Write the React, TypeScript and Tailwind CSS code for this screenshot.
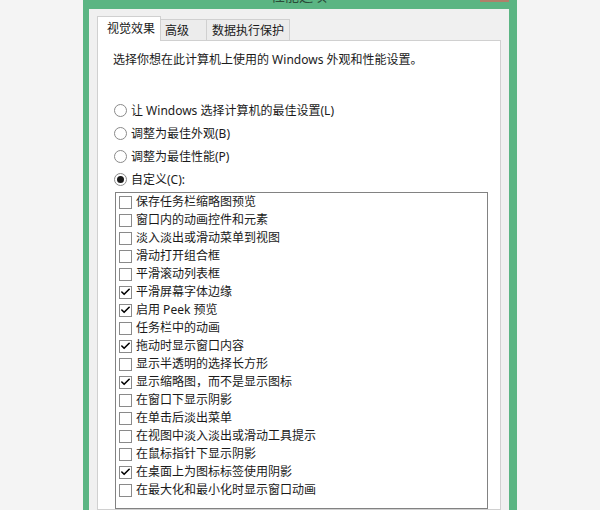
import { Check } from "lucide-react";

const radios = [
  { label: "让 Windows 选择计算机的最佳设置(L)", on: false },
  { label: "调整为最佳外观(B)", on: false },
  { label: "调整为最佳性能(P)", on: false },
  { label: "自定义(C):", on: true },
];

const effects = [
  { label: "保存任务栏缩略图预览", on: false },
  { label: "窗口内的动画控件和元素", on: false },
  { label: "淡入淡出或滑动菜单到视图", on: false },
  { label: "滑动打开组合框", on: false },
  { label: "平滑滚动列表框", on: false },
  { label: "平滑屏幕字体边缘", on: true },
  { label: "启用 Peek 预览", on: true },
  { label: "任务栏中的动画", on: false },
  { label: "拖动时显示窗口内容", on: true },
  { label: "显示半透明的选择长方形", on: false },
  { label: "显示缩略图，而不是显示图标", on: true },
  { label: "在窗口下显示阴影", on: false },
  { label: "在单击后淡出菜单", on: false },
  { label: "在视图中淡入淡出或滑动工具提示", on: false },
  { label: "在鼠标指针下显示阴影", on: false },
  { label: "在桌面上为图标标签使用阴影", on: true },
  { label: "在最大化和最小化时显示窗口动画", on: false },
];

function Radio({ on }: { on: boolean }) {
  return (
    <span className="flex h-[13px] w-[13px] items-center justify-center rounded-full border border-[#8a8a8a] bg-white">
      {on && <span className="h-[7px] w-[7px] rounded-full bg-[#1a1a1a]" />}
    </span>
  );
}

function Box({ on }: { on: boolean }) {
  return (
    <span className="flex h-[13px] w-[13px] items-center justify-center border border-[#8a8a8a] bg-white">
      {on && <Check className="h-[12px] w-[12px] text-black" strokeWidth={3.5} />}
    </span>
  );
}

export default function App() {
  return (
    <div className="h-[510px] w-[600px] overflow-hidden bg-[#f4f4f4] font-['Noto_Sans','Noto_Sans_CJK_SC',sans-serif] text-[12px] text-[#1a1a1a]">
      <div className="ml-[83px] flex h-full w-[434px] flex-col bg-[#5bb583] pl-[6px] pr-[8px]">
        {/* title bar, mostly scrolled out of view */}
        <div className="relative h-[9px] overflow-hidden">
          <div className="-mt-[12px] flex justify-center text-[14px] leading-[16px] text-[#2a4a38]">
            性能选项
          </div>
          <div className="absolute right-[-1px] top-0 h-[2px] w-[30px] bg-[#b0806a]" />
        </div>

        <div className="flex flex-1 flex-col bg-[#f0f0f0] px-[8px] pt-[7px]">
          {/* tabs */}
          <div className="flex h-[24px] items-end">
            <div className="relative z-10 -mb-px flex h-[25px] w-[64px] items-start border border-b-0 border-[#d0d0d0] bg-white pl-[9px] pt-[4px] leading-[16px]">
              视觉效果
            </div>
            <div className="flex h-[21px] w-[46px] items-start border border-l-0 border-b-0 border-[#d0d0d0] bg-[#ececec] pl-[4px] pt-[3px] leading-[16px]">
              高级
            </div>
            <div className="flex h-[21px] w-[83px] items-start border border-l-0 border-b-0 border-[#d0d0d0] bg-[#ececec] pl-[5px] pt-[3px] leading-[16px]">
              数据执行保护
            </div>
          </div>

          {/* tab page */}
          <div className="flex flex-1 flex-col border border-[#d0d0d0] bg-white pl-[15px] pt-[11px]">
            <p className="leading-[16px]">选择你想在此计算机上使用的 Windows 外观和性能设置。</p>

            <div className="mt-[31px] ml-[1px] flex flex-col">
              {radios.map((r) => (
                <div key={r.label} className="flex h-[23px] items-center gap-[4px]">
                  <Radio on={r.on} />
                  <span className="leading-[16px]">{r.label}</span>
                </div>
              ))}
            </div>

            <div className="ml-[2px] mt-[1px] flex w-[373px] flex-1 flex-col border border-[#828282] pl-[3px]">
              {effects.map((e) => (
                <div key={e.label} className="flex h-[18px] shrink-0 items-center gap-[4px]">
                  <Box on={e.on} />
                  <span className="leading-[16px]">{e.label}</span>
                </div>
              ))}
            </div>
          </div>
        </div>
      </div>
    </div>
  );
}
